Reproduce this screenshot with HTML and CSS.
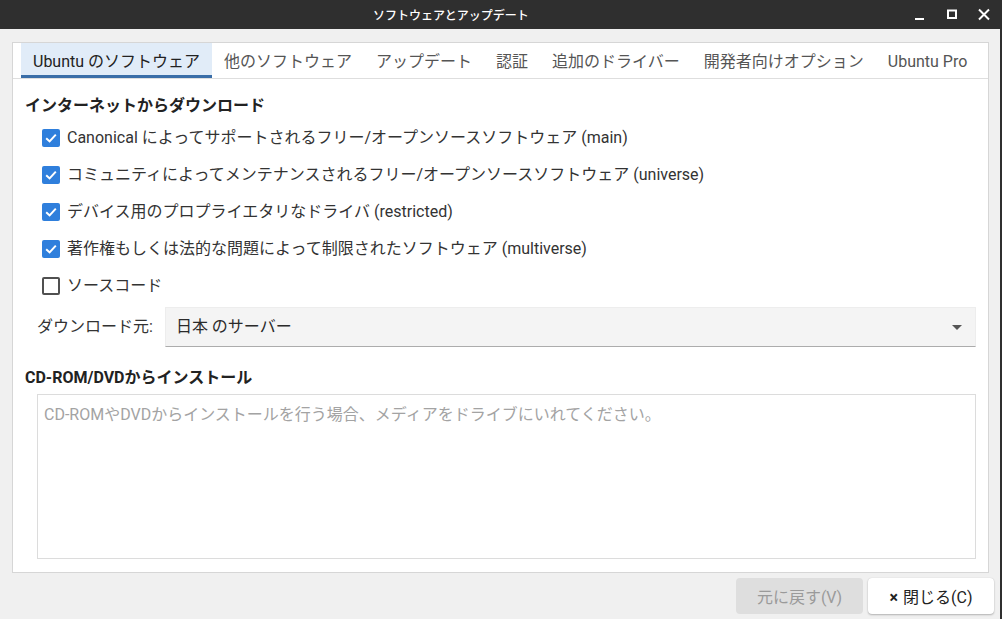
FILE: index.html
```html
<!DOCTYPE html>
<html lang="ja">
<head>
<meta charset="utf-8">
<title>ソフトウェアとアップデート</title>
<link rel="stylesheet" href="styles.css">
</head>
<body>
<div class="window">
  <header class="titlebar">
    <span class="title">ソフトウェアとアップデート</span>
    <div class="controls">
      <svg class="ctl" width="14" height="14" viewBox="0 0 14 14"><rect x="2" y="10" width="9" height="2" fill="#fff"/></svg>
      <svg class="ctl" width="14" height="14" viewBox="0 0 14 14"><rect x="3" y="2.5" width="8" height="7.5" fill="none" stroke="#fff" stroke-width="2"/></svg>
      <svg class="ctl" width="14" height="14" viewBox="0 0 14 14"><path d="M2 1.5 L12 11.5 M12 1.5 L2 11.5" stroke="#fff" stroke-width="2" fill="none"/></svg>
    </div>
  </header>
  <main class="content">
    <section class="notebook">
      <nav class="tabs">
        <span class="tab active">Ubuntu のソフトウェア</span>
        <span class="tab">他のソフトウェア</span>
        <span class="tab">アップデート</span>
        <span class="tab">認証</span>
        <span class="tab">追加のドライバー</span>
        <span class="tab">開発者向けオプション</span>
        <span class="tab">Ubuntu Pro</span>
      </nav>
      <div class="page">
        <h2 class="heading">インターネットからダウンロード</h2>
        <ul class="checks">
          <li class="check-row"><span class="box on"><svg width="18" height="18" viewBox="0 0 18 18"><path d="M4.2 9.2 L7.6 12.4 L13.8 5.6" fill="none" stroke="#fff" stroke-width="2"/></svg></span>Canonical によってサポートされるフリー/オープンソースソフトウェア (main)</li>
          <li class="check-row"><span class="box on"><svg width="18" height="18" viewBox="0 0 18 18"><path d="M4.2 9.2 L7.6 12.4 L13.8 5.6" fill="none" stroke="#fff" stroke-width="2"/></svg></span>コミュニティによってメンテナンスされるフリー/オープンソースソフトウェア (universe)</li>
          <li class="check-row"><span class="box on"><svg width="18" height="18" viewBox="0 0 18 18"><path d="M4.2 9.2 L7.6 12.4 L13.8 5.6" fill="none" stroke="#fff" stroke-width="2"/></svg></span>デバイス用のプロプライエタリなドライバ (restricted)</li>
          <li class="check-row"><span class="box on"><svg width="18" height="18" viewBox="0 0 18 18"><path d="M4.2 9.2 L7.6 12.4 L13.8 5.6" fill="none" stroke="#fff" stroke-width="2"/></svg></span>著作権もしくは法的な問題によって制限されたソフトウェア (multiverse)</li>
          <li class="check-row"><span class="box off"></span>ソースコード</li>
        </ul>
        <div class="source-row">
          <span class="source-label">ダウンロード元:</span>
          <div class="combo"><span>日本 のサーバー</span><span class="arrow"></span></div>
        </div>
        <h2 class="heading heading-cd">CD-ROM/DVDからインストール</h2>
        <div class="cd-area">CD-ROMやDVDからインストールを行う場合、メディアをドライブにいれてください。</div>
      </div>
    </section>
    <footer class="buttons">
      <span class="btn disabled">元に戻す(V)</span>
      <span class="btn primary"><span class="x">×</span>閉じる(C)</span>
    </footer>
  </main>
</div>
</body>
</html>
```

FILE: styles.css
```css
* { box-sizing: border-box; }
html, body { margin: 0; padding: 0; }
body {
  font-family: Roboto, "Noto Sans CJK JP", sans-serif;
  background: #f0f0f0;
}
.window {
  width: 1002px;
  height: 619px;
  display: flex;
  flex-direction: column;
  overflow: hidden;
}
.titlebar {
  height: 29px;
  background: #2f2f2f;
  color: #fff;
  display: flex;
  align-items: center;
  justify-content: center;
  padding-right: 100px;
  position: relative;
  flex: none;
}
.title {
  font-family: "Noto Sans CJK JP", sans-serif;
  font-size: 12px;
  font-weight: 500;
  line-height: 16px;
}
.controls {
  position: absolute;
  right: 11px;
  top: 0;
  height: 29px;
  display: flex;
  align-items: center;
  gap: 18px;
}
.ctl { display: block; }
.content {
  flex: 1;
  background: #f0f0f0;
  border-right: 2px solid #2f2f2f;
  display: flex;
  flex-direction: column;
}
.notebook {
  margin: 13px 11px 0 12px;
  height: 531px;
  border: 1px solid #d6d6d6;
  background: #fff;
  display: flex;
  flex-direction: column;
}
.tabs {
  display: flex;
  padding-left: 8px;
  height: 36px;
  border-bottom: 1px solid #dedede;
}
.tab {
  height: 35px;
  padding: 3px 12px 0 12px;
  display: flex;
  align-items: center;
  font-size: 16px;
  line-height: 20px;
  color: #555;
  white-space: nowrap;
}
.tab.active {
  background: #e1ecf8;
  color: #222;
  box-shadow: inset 0 -3px 0 #3a6ea8;
}
.page {
  padding: 17px 12px 0 12px;
  display: flex;
  flex-direction: column;
}
.heading {
  margin: 0;
  font-size: 16px;
  line-height: 20px;
  font-weight: 700;
  color: #222;
}
.checks {
  list-style: none;
  margin: 3px 0 0 0;
  padding: 0 0 0 17px;
}
.check-row {
  height: 37px;
  display: flex;
  align-items: center;
  font-size: 16px;
  line-height: 20px;
  color: #333;
  white-space: nowrap;
}
.box {
  width: 18px;
  height: 18px;
  border-radius: 2px;
  margin-right: 7px;
  flex: none;
  display: block;
}
.box svg { display: block; }
.box.on { background: #2f7fdc; }
.box.off { border: 2px solid #505050; background: #fff; }
.source-row {
  margin-top: 3px;
  padding-left: 12px;
  display: flex;
  align-items: center;
  gap: 12px;
}
.source-label {
  font-size: 16px;
  line-height: 20px;
  color: #333;
  white-space: nowrap;
}
.combo {
  flex: 1;
  height: 40px;
  background: #f4f4f4;
  border: 1px solid #ededed;
  border-bottom-color: #acacac;
  display: flex;
  align-items: center;
  justify-content: space-between;
  padding: 0 13px 0 10px;
  font-size: 16px;
  line-height: 20px;
  color: #2a2a2a;
}
.arrow {
  width: 0;
  height: 0;
  border-left: 5px solid transparent;
  border-right: 5px solid transparent;
  border-top: 5px solid #555;
}
.heading-cd { margin-top: 21px; }
.cd-area {
  margin: 6px 0 0 12px;
  height: 165px;
  border: 1px solid #dcdcdc;
  padding: 10px 6px;
  font-size: 16px;
  line-height: 20px;
  color: #a3a3a3;
}
.buttons {
  display: flex;
  justify-content: flex-end;
  gap: 5px;
  padding: 5px 6px 0 0;
}
.btn {
  height: 36px;
  border-radius: 4px;
  display: flex;
  align-items: center;
  justify-content: center;
  padding-top: 3px;
  font-size: 16px;
  line-height: 20px;
  white-space: nowrap;
}
.btn.disabled {
  width: 127px;
  background: #dedede;
  color: #9a9a9a;
}
.btn.primary {
  width: 126px;
  background: #fff;
  color: #222;
  box-shadow: 0 1px 2px rgba(0,0,0,0.25), 0 0 1px rgba(0,0,0,0.15);
}
.x { font-weight: 700; margin-right: 5px; }
```
